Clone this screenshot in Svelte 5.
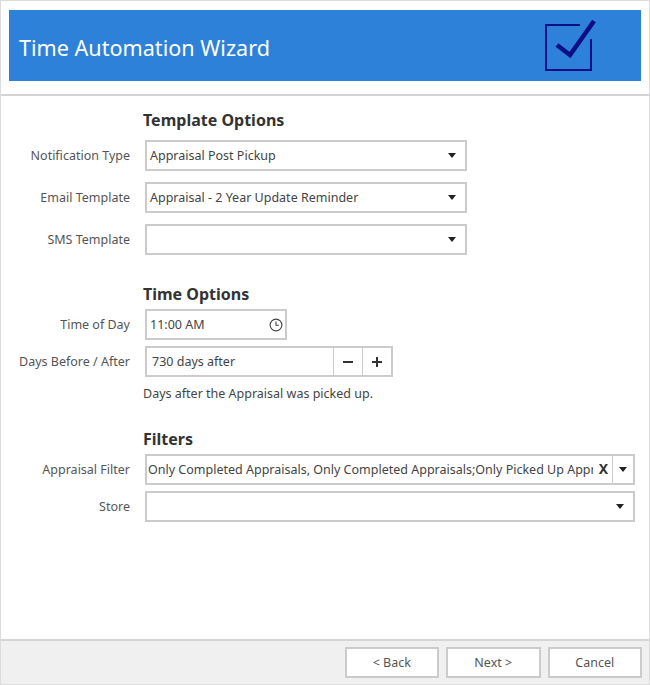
<script lang="ts">
  const caret = 'M0 0h8l-4 5z';
</script>

{#snippet arrow()}
  <svg class="caret" width="8" height="5" viewBox="0 0 8 5"><path d={caret} /></svg>
{/snippet}

{#snippet select(value: string, cls: string)}
  <div class="field {cls}">
    <span class="value">{value}</span>
    {@render arrow()}
  </div>
{/snippet}

<div class="wizard">
  <div class="top">
    <header class="banner">
      <h1>Time Automation Wizard</h1>
      <svg class="logo" width="52" height="54" viewBox="0 0 52 54" fill="none">
        <path d="M35 6H1v45h45V20" stroke="#0a0f85" stroke-width="2" />
        <path d="M12 26l13 10L49 2" stroke="#0a0f85" stroke-width="4.5" />
      </svg>
    </header>
  </div>

  <main class="content">
    <section class="template">
      <h2>Template Options</h2>
      <div class="row">
        <span class="label">Notification Type</span>
        {@render select('Appraisal Post Pickup', 'w322')}
      </div>
      <div class="row">
        <span class="label">Email Template</span>
        {@render select('Appraisal - 2 Year Update Reminder', 'w322')}
      </div>
      <div class="row">
        <span class="label">SMS Template</span>
        {@render select('', 'w322')}
      </div>
    </section>

    <section class="time">
      <h2>Time Options</h2>
      <div class="row">
        <span class="label">Time of Day</span>
        <div class="field w142">
          <span class="value">11:00 AM</span>
          <svg class="clock" width="14" height="14" viewBox="0 0 15 15" fill="none" stroke="#444" stroke-width="1.2">
            <circle cx="7.5" cy="7.5" r="6.3" />
            <path d="M7.5 3.8v3.9h3" />
          </svg>
        </div>
      </div>
      <div class="row">
        <span class="label">Days Before / After</span>
        <div class="field w248 spin">
          <span class="value">730 days after</span>
          <span class="step"><svg width="10" height="10" viewBox="0 0 10 10"><path d="M0 4h10v2H0z" fill="#333" /></svg></span>
          <span class="step"><svg width="10" height="10" viewBox="0 0 10 10"><path d="M0 4h10v2H0zM4 0h2v10H4z" fill="#333" /></svg></span>
        </div>
      </div>
      <p class="hint">Days after the Appraisal was picked up.</p>
    </section>

    <section class="filters">
      <h2>Filters</h2>
      <div class="row">
        <span class="label">Appraisal Filter</span>
        <div class="field w490 multi">
          <span class="value clip">Only Completed Appraisals, Only Completed Appraisals;Only Picked Up Appraisals</span>
          <span class="clear">X</span>
          <span class="drop">{@render arrow()}</span>
        </div>
      </div>
      <div class="row">
        <span class="label">Store</span>
        {@render select('', 'w490')}
      </div>
    </section>
  </main>

  <footer class="actions">
    <button>&lt; Back</button>
    <button>Next &gt;</button>
    <button>Cancel</button>
  </footer>
</div>

<style>
  :global(body) {
    margin: 0;
    background: #fff;
  }

  .wizard {
    width: 650px;
    height: 685px;
    box-sizing: border-box;
    border: 1px solid #dcdcdc;
    display: flex;
    flex-direction: column;
    font-family: "Noto Sans", "Open Sans", sans-serif;
    font-size: 12.5px;
    color: #444;
    background: #fff;
  }

  .top {
    padding: 9px 8px 13px 8px;
    border-bottom: 2px solid #d4d4d4;
  }

  .banner {
    height: 71px;
    background: #2e81d8;
    display: flex;
    align-items: center;
    justify-content: space-between;
    padding: 0 44px 0 10px;
  }

  h1 {
    margin: 4px 0 0;
    font-size: 21.6px;
    font-weight: 400;
    color: #fff;
  }

  .logo {
    display: block;
    margin-top: 1px;
  }

  .content {
    flex: 1;
    padding: 14px 14px 0 0;
  }

  section {
    display: flex;
    flex-direction: column;
  }

  .time {
    margin-top: 18px;
  }

  .filters {
    margin-top: 25px;
  }

  h2 {
    margin: 0 0 10px 142px;
    font-size: 16px;
    line-height: 20px;
    font-weight: 700;
    color: #333;
  }

  .time h2,
  .filters h2 {
    margin-bottom: 5px;
  }

  .row {
    display: flex;
    align-items: center;
    gap: 15px;
    margin-bottom: 11px;
  }

  .time .row,
  .filters .row {
    margin-bottom: 6px;
  }

  .label {
    width: 129px;
    text-align: right;
    color: #555;
    white-space: nowrap;
  }

  .field {
    box-sizing: border-box;
    height: 31px;
    border: 2px solid #cbcbcb;
    background: #fff;
    display: flex;
    align-items: center;
    padding: 0 9px 0 3px;
  }

  .w322 { width: 322px; }
  .w142 { width: 142px; }
  .w248 { width: 248px; }
  .w490 { width: 490px; }

  .value {
    flex: 1;
    min-width: 0;
    white-space: nowrap;
  }

  .clip {
    overflow: hidden;
  }

  .caret {
    display: block;
    fill: #222;
  }

  .clock {
    margin-right: -7px;
  }

  .spin {
    padding: 0 0 0 5px;
  }

  .step {
    width: 28px;
    align-self: stretch;
    border-left: 1px solid #cbcbcb;
    display: flex;
    align-items: center;
    justify-content: center;
  }

  .multi {
    padding: 0 0 0 1px;
  }

  .clear {
    box-sizing: border-box;
    width: 19px;
    padding-left: 2px;
    margin-top: -3px;
    text-align: center;
    font-weight: 700;
    font-size: 14px;
    color: #333;
  }

  .drop {
    width: 20px;
    align-self: stretch;
    border-left: 1px solid #cbcbcb;
    display: flex;
    align-items: center;
    justify-content: center;
  }

  .hint {
    margin: 1px 0 0 142px;
    line-height: 20px;
    color: #444;
  }

  .actions {
    height: 45px;
    box-sizing: border-box;
    background: #f0f0f0;
    border-top: 2px solid #d4d4d4;
    display: flex;
    justify-content: flex-end;
    gap: 7px;
    padding: 6px 7px 0 0;
  }

  button {
    width: 94.5px;
    height: 31px;
    box-sizing: border-box;
    background: #fff;
    border: 2px solid #cbcbcb;
    font: inherit;
    color: #555;
    padding: 0;
  }
</style>
